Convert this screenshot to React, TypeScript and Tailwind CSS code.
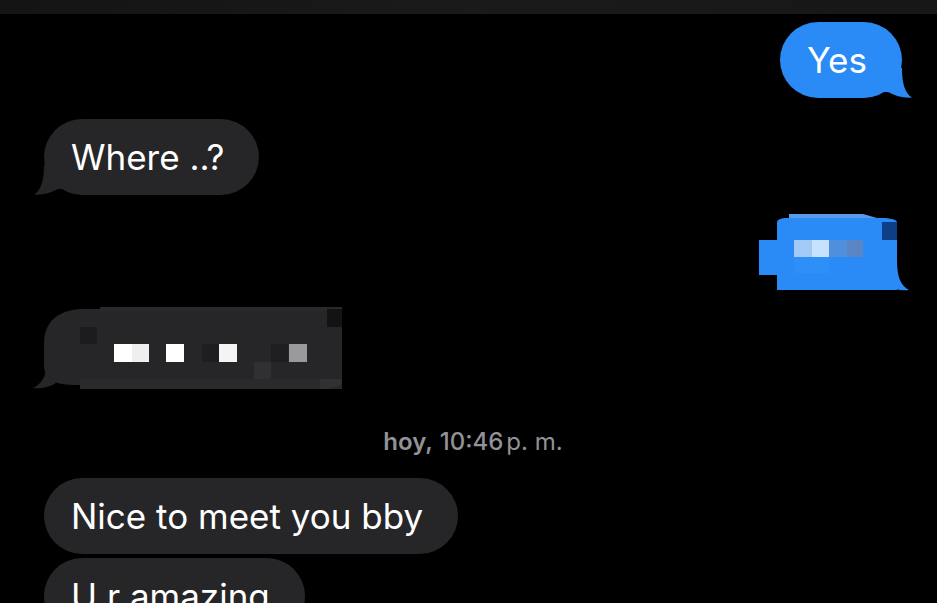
import React from "react";

const BLUE = "#2a8af6";
const GRAY = "#262628";

const Tail: React.FC<{ color: string; side: "left" | "right" }> = ({ color, side }) => (
  <svg
    width="30"
    height="30"
    viewBox="0 0 30 30"
    className={
      side === "right"
        ? "absolute bottom-0 right-[-10px]"
        : "absolute bottom-0 left-[-10px] -scale-x-100"
    }
  >
    <path d="M20 0 C20 16 23 25 30 29.6 C22 30.4 13 28 6 24 L0 24 L0 0 Z" fill={color} />
  </svg>
);

const Bubble: React.FC<{ text: string; side: "left" | "right"; tail?: boolean; className?: string }> = ({
  text,
  side,
  tail = true,
  className = "",
}) => {
  const color = side === "right" ? BLUE : GRAY;
  return (
    <div
      className={`relative flex h-[76px] items-center rounded-[38px] pl-[27px] pr-[35px] text-[35px] text-white ${className}`}
      style={{ backgroundColor: color }}
    >
      {tail && <Tail color={color} side={side} />}
      <span className="relative">{text}</span>
    </div>
  );
};

// pixelated (censored) blue bubble
const BlurBlue = () => (
  <svg width="155" height="85" viewBox="0 0 155 85" className="block">
    <path d="M32 4 L106 4 L120 8 L32 8 Z" fill="#5a9be8" />
    <path d="M20 12 C20 10 24 8 30 8 L125 8 C133 8 140 10 140 12 Z" fill={BLUE} />
    <rect x="20" y="12" width="120" height="68" fill={BLUE} />
    <rect x="125" y="12" width="15" height="18" fill="#0c3f86" />
    <rect x="2" y="30" width="20" height="35" fill={BLUE} />
    <path d="M140 50 C140 66 143 75 152 80 C144 81 136 79 128 75 L128 50 Z" fill={BLUE} />
    <rect x="37" y="30" width="18" height="17" fill="#a3c9f6" />
    <rect x="55" y="30" width="17" height="17" fill="#c6e2ff" />
    <rect x="72" y="30" width="18" height="17" fill="#4f8fdb" />
    <rect x="90" y="30" width="16" height="17" fill="#5a86c6" />
    <rect x="37" y="47" width="35" height="16" fill="#2f8ff8" />
  </svg>
);

// pixelated (censored) gray bubble
const BlurGray = () => (
  <svg width="315" height="88" viewBox="0 0 315 88" className="block">
    <path d="M50 4 L312 4 L312 84 L50 84 L50 80 C30 80 14 78 14 60 L14 40 C14 14 30 6 50 4 Z" fill={GRAY} />
    <path d="M16 64 C16 72 10 80 3 83 C12 84 20 82 26 78 Z" fill={GRAY} />
    <rect x="70" y="2" width="242" height="4" fill="#29292b" />
    <rect x="297" y="4" width="15" height="18" fill="#131314" />
    <rect x="50" y="22" width="17" height="17" fill="#1c1c1e" />
    <rect x="84" y="39" width="18" height="18" fill="#ffffff" />
    <rect x="102" y="39" width="17" height="18" fill="#efefef" />
    <rect x="136" y="39" width="18" height="18" fill="#ffffff" />
    <rect x="172" y="39" width="17" height="18" fill="#1e1e20" />
    <rect x="189" y="39" width="18" height="18" fill="#f4f4f4" />
    <rect x="241" y="39" width="17" height="18" fill="#1f1f21" />
    <rect x="259" y="39" width="18" height="18" fill="#9a9a9c" />
    <rect x="224" y="57" width="17" height="17" fill="#303032" />
    <rect x="50" y="74" width="262" height="10" fill="#2a2a2c" />
    <path d="M290 74 L312 74 L312 78 C308 82 300 84 290 84 Z" fill="#313133" />
  </svg>
);

export default function App() {
  return (
    <div
      className="flex h-[603px] w-[937px] flex-col overflow-hidden bg-black"
      style={{ fontFamily: "Inter, 'Noto Sans', sans-serif" }}
    >
      <div className="h-[14px] shrink-0 bg-gradient-to-r from-[#141414] via-[#1a1a1a] to-[#171717]" />

      <div className="flex flex-col px-[35px] pl-[44px]">
        <div className="mt-[8px] flex justify-end">
          <Bubble text="Yes" side="right" />
        </div>

        <div className="mt-[21px] flex justify-start">
          <Bubble text="Where ..?" side="left" />
        </div>

        <div className="mr-[-10px] mt-[15px] flex justify-end">
          <BlurBlue />
        </div>

        <div className="ml-[-14px] mt-[10px] flex justify-start">
          <BlurGray />
        </div>

        <div className="mt-[37px] text-center text-[24px] leading-none text-[#929297]">
          <span className="font-semibold">hoy,</span> <span className="font-medium">10:46</span>
          <span className="ml-[3px]">p. m.</span>
        </div>

        <div className="mt-[24px] flex justify-start">
          <Bubble text="Nice to meet you bby" side="left" tail={false} />
        </div>

        <div className="mt-[4px] flex justify-start">
          <Bubble text="U r amazing" side="left" tail={false} />
        </div>
      </div>
    </div>
  );
}
